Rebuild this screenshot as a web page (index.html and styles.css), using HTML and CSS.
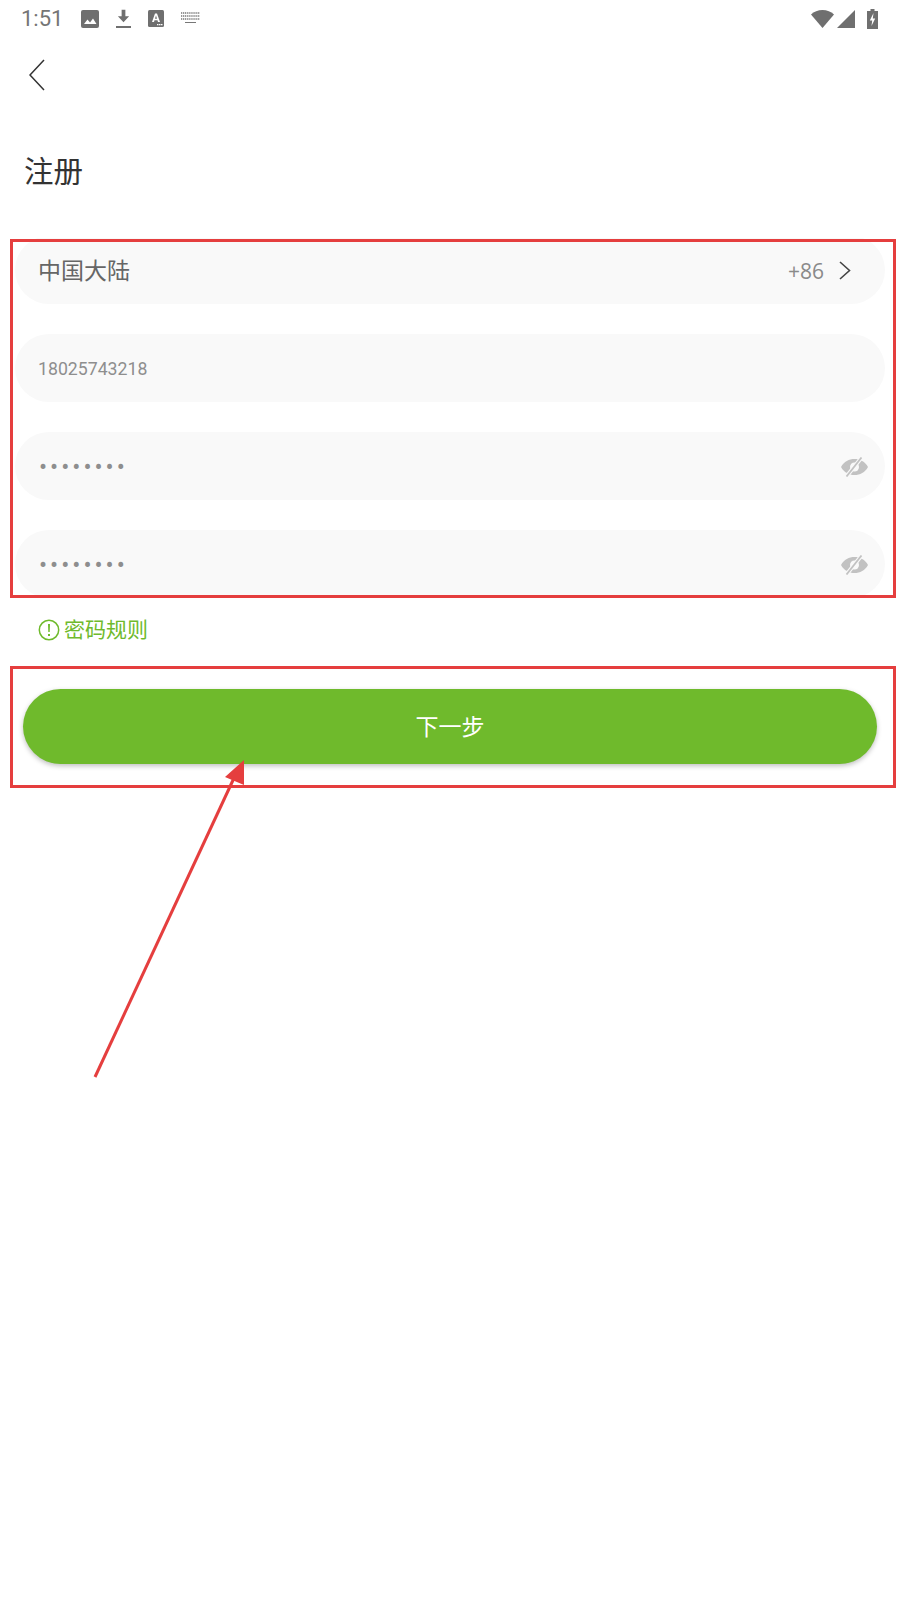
FILE: index.html
```html
<!DOCTYPE html>
<html>
<head>
    <meta charset="utf-8">
    <link rel="stylesheet" href="styles.css">
</head>
<body>
    <div class="page">
        <div class="status-bar">
            <span class="time">1:51</span>
            <svg class="st-icon st-image" viewBox="0 0 18 18"><path d="M2 0h14a2 2 0 0 1 2 2v14a2 2 0 0 1-2 2H2a2 2 0 0 1-2-2V2a2 2 0 0 1 2-2z" fill="#6f6f6f"/><path d="M3 14l3.500-4.500 2.500 3 3-4 3.500 5.500z" fill="#fff"/></svg>
            <svg class="st-icon st-download" viewBox="0 0 16 20"><path d="M6 0h4v7h4l-6 6.500L2 7h4zM0 17.500h16v2H0z" fill="#6f6f6f"/></svg>
            <svg class="st-icon st-font" viewBox="0 0 16 17"><rect width="16" height="17" rx="1.500" fill="#6f6f6f"/><path d="M4 12l3-8.500h2l3 8.500h-2l-.5-1.700h-3L6 12zM7 8.700h2L8 5.500zM9 14h1.500v1.200H9zM11 14h1.500v1.200H11zM13 14h1.500v1.200H13z" fill="#fff"/></svg>
            <svg class="st-icon st-keys" viewBox="0 0 19 13"><path d="M0 1h19M0 4h19M0 7h19" stroke="#777" stroke-width="1.500" stroke-dasharray="1.200 .7" fill="none"/><path d="M4 10h11v1H4z" fill="#777"/></svg>
            <span class="spacer"></span>
            <svg class="st-icon st-wifi" viewBox="0 0 23 18"><path d="M0 4.500C3 1.700 7 0 11.500 0S20 1.700 23 4.500L11.500 18z" fill="#6f6f6f"/></svg>
            <svg class="st-icon st-signal" viewBox="0 0 18 18"><path d="M18 0v18H0z" fill="#6f6f6f"/></svg>
            <svg class="st-icon st-battery" viewBox="0 0 11 20"><path d="M3.500 0h4v2H11v18H0V2h3.500z" fill="#6f6f6f"/><path d="M6.500 4L2.800 11.500h2.400L4.500 17l3.700-7.500H5.800z" fill="#fff"/></svg>
        </div>

        <div class="nav">
            <svg class="back" viewBox="0 0 16 32"><path d="M15 1L1 16l14 15" fill="none" stroke="#333" stroke-width="1.500"/></svg>
        </div>

        <h1 class="title">注册</h1>

        <div class="form">
            <div class="field">
                <span class="region">中国大陆</span>
                <span class="spacer"></span>
                <span class="code">+86</span>
                <svg class="chevron" viewBox="0 0 12 19"><path d="M1 1l9.500 8.500L1 18" fill="none" stroke="#444" stroke-width="1.600"/></svg>
            </div>
            <div class="field">
                <span class="phone">18025743218</span>
            </div>
            <div class="field">
                <span class="dots">••••••••</span>
                <span class="spacer"></span>
                <svg class="eye" viewBox="0 0 27 20"><use href="#eye-off"/></svg>
            </div>
            <div class="field">
                <span class="dots">••••••••</span>
                <span class="spacer"></span>
                <svg class="eye" viewBox="0 0 27 20"><use href="#eye-off"/></svg>
            </div>
        </div>

        <div class="rules">
            <svg class="rules-icon" viewBox="0 0 22 22"><circle cx="11" cy="11" r="9.700" fill="none" stroke="#6fba2c" stroke-width="1.500"/><path d="M10 5h2l-.3 8h-1.400zM10 15h2v2h-2z" fill="#6fba2c"/></svg>
            <span>密码规则</span>
        </div>

        <button class="next">下一步</button>

        <!-- red annotations drawn on top of the screenshot -->
        <div class="mark mark-form"></div>
        <div class="mark mark-next"></div>
        <svg class="arrow" viewBox="0 0 900 1600">
            <path d="M95 1077L234 778" stroke="#e53e3e" stroke-width="3" fill="none"/>
            <path d="M244 760L244 785L225 777z" fill="#e53e3e"/>
        </svg>
    </div>

    <svg class="defs" width="0" height="0">
        <symbol id="eye-off" viewBox="0 0 27 20">
            <path d="M0 10C3 4.500 8 2 13.500 2S24 4.500 27 10c-3 5.500-8 8-13.500 8S3 15.500 0 10z" fill="#c2c2c2"/>
            <circle cx="13.500" cy="10" r="4.500" fill="#f9f9f9"/>
            <path d="M5 20L21 0" stroke="#f9f9f9" stroke-width="4"/>
            <path d="M5.500 19.500L20.500 .5" stroke="#c2c2c2" stroke-width="1.800"/>
        </symbol>
    </svg>
</body>
</html>
```

FILE: styles.css
```css
* {
    box-sizing: border-box;
}

body {
    margin: 0;
    background-color: #ffffff;
    font-family: Roboto, "Noto Sans CJK SC", sans-serif;
}

.page {
    position: relative;
    width: 900px;
    height: 1600px;
    overflow: hidden;
}

.spacer {
    flex: 1;
}

.status-bar {
    display: flex;
    align-items: center;
    height: 37px;
    padding: 0 22px 0 21px;
}

.time {
    width: 60px;
    font-size: 22px;
    color: #757575;
}

.st-icon {
    display: block;
    flex: none;
}

.st-image {
    width: 18px;
    height: 18px;
}

.st-download {
    width: 15px;
    height: 20px;
    margin-left: 17px;
}

.st-font {
    width: 16px;
    height: 17px;
    margin-left: 17px;
}

.st-keys {
    width: 19px;
    height: 13px;
    margin-left: 17px;
}

.st-wifi {
    width: 23px;
    height: 18px;
}

.st-signal {
    width: 18px;
    height: 18px;
    margin-left: 3px;
}

.st-battery {
    width: 11px;
    height: 20px;
    margin-left: 12px;
}

.nav {
    height: 53px;
    padding: 22px 0 0 29px;
}

.back {
    display: block;
    width: 16px;
    height: 32px;
}

.title {
    margin: 62px 0 0 24px;
    font-size: 29.500px;
    line-height: 40px;
    font-weight: 400;
    color: #333333;
}

/* the red mark cuts off the first and last field */
.form {
    display: flex;
    flex-direction: column;
    gap: 30px;
    height: 360px;
    margin: 46px 15px 0 15px;
    overflow: hidden;
}

.field {
    display: flex;
    flex: none;
    align-items: center;
    height: 68px;
    padding: 0 17px 0 23px;
    border-radius: 34px;
    background-color: #f9f9f9;
}

.field:first-child {
    margin-top: -2px;
}

.region {
    padding-bottom: 2px;
    font-size: 23px;
    color: #666666;
}

.code {
    padding-top: 2px;
    font-family: "Open Sans", sans-serif;
    font-size: 21px;
    color: #8a8a8a;
}

.chevron {
    width: 12px;
    height: 19px;
    margin: 0 17px 0 15px;
}

.phone {
    padding-top: 2px;
    font-size: 17.700px;
    color: #8e8e8e;
}

.dots {
    padding: 2px 0 0 1px;
    font-size: 24px;
    letter-spacing: 3px;
    color: #8e8e8e;
}

.eye {
    width: 27px;
    height: 20px;
    margin-top: 2px;
}

.rules {
    display: flex;
    align-items: center;
    gap: 4px;
    margin: 17px 0 0 38px;
    font-size: 21px;
    line-height: 30px;
    color: #6fba2c;
}

.rules-icon {
    width: 22px;
    height: 22px;
}

.next {
    display: block;
    width: 854px;
    height: 75px;
    margin: 44px 0 0 23px;
    padding: 0 0 4px;
    border: none;
    border-radius: 38px;
    background-color: #6fba2c;
    box-shadow: 0 2px 5px rgba(0,0,0,0.25);
    color: #ffffff;
    font-family: inherit;
    font-size: 23px;
}

.mark {
    position: absolute;
    left: 10px;
    width: 886px;
    border: 3px solid #e53e3e;
}

.mark-form {
    top: 239px;
    height: 359px;
}

.mark-next {
    top: 666px;
    height: 122px;
}

.arrow {
    position: absolute;
    left: 0;
    top: 0;
    width: 900px;
    height: 1600px;
}

.defs {
    position: absolute;
}
```
